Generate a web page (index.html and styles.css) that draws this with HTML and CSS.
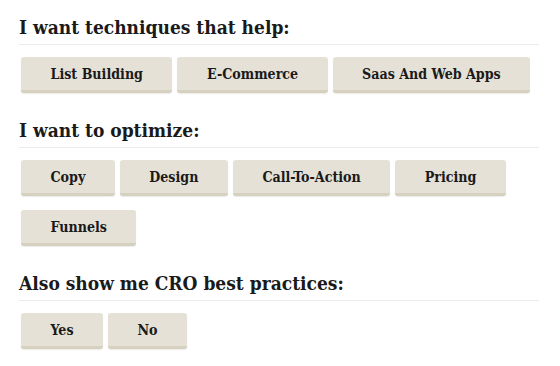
FILE: index.html
```html
<!DOCTYPE html>
<html lang="en">
<head>
    <meta charset="UTF-8">
    <title>CRO Filters</title>
    <link rel="stylesheet" href="styles.css">
</head>
<body>
    <div class="filters">
        <div class="group">
            <h3>I want techniques that help:</h3>
            <div class="options">
                <button type="button" class="btn">List Building</button>
                <button type="button" class="btn">E-Commerce</button>
                <button type="button" class="btn">Saas And Web Apps</button>
            </div>
        </div>
        <div class="group">
            <h3>I want to optimize:</h3>
            <div class="options">
                <button type="button" class="btn">Copy</button>
                <button type="button" class="btn">Design</button>
                <button type="button" class="btn">Call-To-Action</button>
                <button type="button" class="btn">Pricing</button>
                <button type="button" class="btn">Funnels</button>
            </div>
        </div>
        <div class="group">
            <h3>Also show me CRO best practices:</h3>
            <div class="options">
                <button type="button" class="btn">Yes</button>
                <button type="button" class="btn">No</button>
            </div>
        </div>
    </div>
</body>
</html>
```

FILE: styles.css
```css
body
{
    margin: 0;
    background: #fff;
    font-family: "DejaVu Serif Condensed", "DejaVu Serif", Georgia, serif;
    font-stretch: condensed;
    color: #1a1a1a;
}
.filters
{
    padding: 14px 21px 0 19px;
}
.group
{
    margin-bottom: 24px;
}
.group h3
{
    margin: 0 0 12px 0;
    padding-bottom: 4px;
    border-bottom: 1px solid #ebebeb;
    font-size: 19px;
    font-weight: bold;
    line-height: 26px;
}
.options
{
    display: flex;
    flex-wrap: wrap;
    column-gap: 5px;
    row-gap: 14px;
    padding-left: 2px;
}
.btn
{
    height: 36px;
    padding: 0 29.5px;
    border: none;
    border-bottom: 3px solid #d6d0bf;
    border-radius: 3px;
    background: #e5e1d6;
    box-shadow: 0 1px 1px rgba(0,0,0,0.08);
    font-family: "DejaVu Serif Condensed", "DejaVu Serif", Georgia, serif;
    font-stretch: condensed;
    font-size: 14.1px;
    font-weight: bold;
    color: #1a1a1a;
    cursor: pointer;
}
```
